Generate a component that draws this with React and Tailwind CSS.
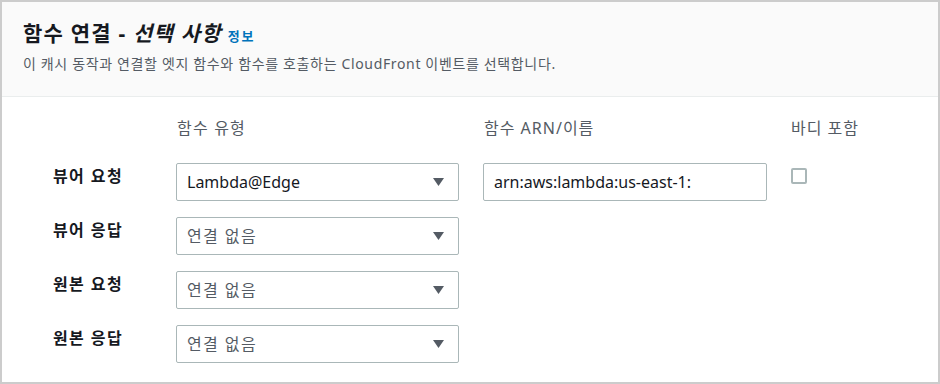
import React from "react";

const font = { fontFamily: '"Noto Sans", "Noto Sans CJK KR", sans-serif' };

const rows = [
  { label: "뷰어 요청", value: "Lambda@Edge", selected: true, arn: true },
  { label: "뷰어 응답", value: "연결 없음" },
  { label: "원본 요청", value: "연결 없음" },
  { label: "원본 응답", value: "연결 없음" },
];

const Select = ({ value, selected }) => (
  <div className="h-[38px] w-[283px] flex items-center justify-between rounded-[2px] border border-[#aab7b8] bg-white pl-[10px] pr-[14px]">
    <span
      className={`text-[16px] leading-none ${
        selected ? "text-[#16191f]" : "text-[#545b64] tracking-[1.4px]"
      }`}
    >
      {value}
    </span>
    <svg width="11" height="8" viewBox="0 0 11 8">
      <path d="M0 0 H11 L5.5 8 Z" fill="#545b64" />
    </svg>
  </div>
);

export default function App() {
  return (
    <div
      className="w-[940px] h-[384px] border-2 border-[#cccccc] bg-white flex flex-col overflow-hidden"
      style={font}
    >
      {/* header */}
      <div className="h-[95px] shrink-0 bg-[#fafafa] border-b border-[#eaeded] px-[21px] pt-[17px]">
        <div className="flex items-baseline gap-[6px] leading-[28px]">
          <h2 className="text-[21px] tracking-[1.2px] font-bold text-[#16191f]">
            함수 연결 - <i>선택 사항</i>
          </h2>
          <a className="text-[13px] tracking-[1.8px] font-bold text-[#0073bb]">정보</a>
        </div>
        <p className="mt-[4px] text-[14px] tracking-[0.65px] leading-[20px] text-[#545b64]">
          이 캐시 동작과 연결할 엣지 함수와 함수를 호출하는 CloudFront 이벤트를 선택합니다.
        </p>
      </div>

      {/* body */}
      <div className="pl-[51px] pt-[19px]">
        <div className="grid grid-cols-[99px_283px_284px_1fr] gap-x-[24px] text-[16px] leading-[24px] text-[#545b64]">
          <div></div>
          <div className="pl-[1px] tracking-[1.2px]">함수 유형</div>
          <div className="pl-[1px] tracking-[1px]">함수 ARN/이름</div>
          <div className="tracking-[1px]">바디 포함</div>
        </div>

        <div className="mt-[23px] flex flex-col gap-[16px]">
          {rows.map((r) => (
            <div
              key={r.label}
              className="grid grid-cols-[99px_283px_284px_1fr] gap-x-[24px] items-start"
            >
              <div className="pt-[1px] text-[16px] tracking-[1.4px] leading-[24px] font-bold text-[#16191f]">
                {r.label}
              </div>
              <Select value={r.value} selected={r.selected} />
              {r.arn ? (
                <div className="h-[38px] w-[284px] flex items-center rounded-[2px] border border-[#aab7b8] bg-white px-[10px]">
                  <span className="text-[16px] leading-none text-[#16191f]">
                    arn:aws:lambda:us-east-1:
                  </span>
                </div>
              ) : (
                <div></div>
              )}
              {r.arn ? (
                <div className="pt-[5px]">
                  <div className="h-[16px] w-[16px] rounded-[2px] border-2 border-[#aab7b8] bg-white"></div>
                </div>
              ) : (
                <div></div>
              )}
            </div>
          ))}
        </div>
      </div>
    </div>
  );
}
